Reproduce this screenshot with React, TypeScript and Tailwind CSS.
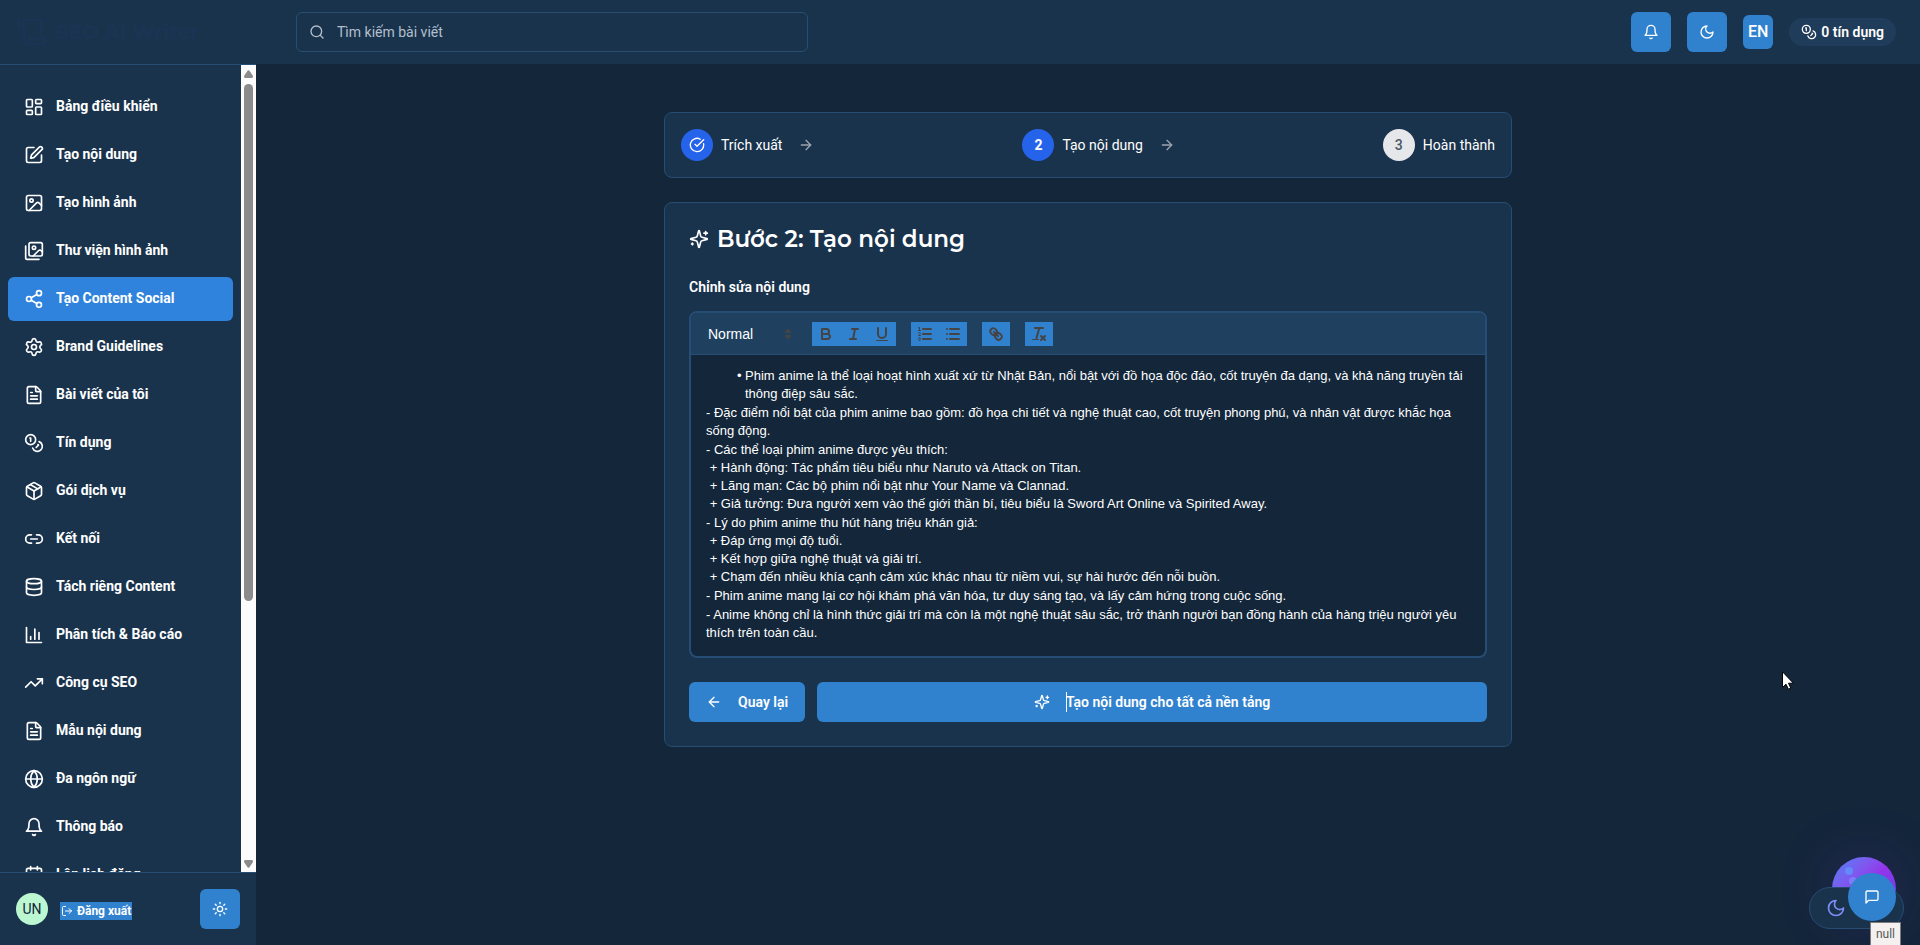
import React from "react";
import {
  ArrowLeft, ArrowRight, Calendar, CircleCheckBig, Coins, Database, FileText, Globe,
  Image, LayoutDashboard, Link2, LogOut, Package, Scroll, Search, Settings, Share2,
  SquarePen, Sun, TrendingUp,
} from "lucide-react";

type IconType = React.ComponentType<{ className?: string }>;

function strokeIcon(body: React.ReactNode): IconType {
  return ({ className }) => (
    <svg
      viewBox="0 0 24 24"
      className={className}
      fill="none"
      stroke="currentColor"
      strokeWidth="2"
      strokeLinecap="round"
      strokeLinejoin="round"
      aria-hidden="true"
    >
      {body}
    </svg>
  );
}

const Sparkles = strokeIcon(
  <>
    <path d="M9.937 15.5A2 2 0 0 0 8.5 14.063l-6.135-1.582a.5.5 0 0 1 0-.962L8.5 9.936A2 2 0 0 0 9.937 8.5l1.582-6.135a.5.5 0 0 1 .963 0L14.063 8.5A2 2 0 0 0 15.5 9.937l6.135 1.581a.5.5 0 0 1 0 .964L15.5 14.063a2 2 0 0 0-1.437 1.437l-1.582 6.135a.5.5 0 0 1-.963 0z" />
    <path d="M20 3v4M22 5h-4M4 17v2M5 18H3" />
  </>,
);
const Moon = strokeIcon(<path d="M12 3a6 6 0 0 0 9 9 9 9 0 1 1-9-9Z" />);
const Bell = strokeIcon(
  <path d="M6 8a6 6 0 0 1 12 0c0 7 3 9 3 9H3s3-2 3-9M10.3 21a1.94 1.94 0 0 0 3.4 0" />,
);
const Chat = strokeIcon(<path d="M21 15a2 2 0 0 1-2 2H7l-4 4V5a2 2 0 0 1 2-2h14a2 2 0 0 1 2 2z" />);
const Chart = strokeIcon(<path d="M3 3v18h18M18 17V9M13 17V5M8 17v-3" />);
const Gallery = strokeIcon(
  <>
    <path d="M18 22H4a2 2 0 0 1-2-2V6M22 13l-1.296-1.296a2.41 2.41 0 0 0-3.408 0L11 18" />
    <circle cx="12" cy="8" r="2" />
    <rect width="16" height="16" x="6" y="2" rx="2" />
  </>,
);

const navItems: { label: string; icon: IconType; active?: boolean }[] = [
  { label: "Bảng điều khiển", icon: LayoutDashboard },
  { label: "Tạo nội dung", icon: SquarePen },
  { label: "Tạo hình ảnh", icon: Image },
  { label: "Thư viện hình ảnh", icon: Gallery },
  { label: "Tạo Content Social", icon: Share2, active: true },
  { label: "Brand Guidelines", icon: Settings },
  { label: "Bài viết của tôi", icon: FileText },
  { label: "Tín dụng", icon: Coins },
  { label: "Gói dịch vụ", icon: Package },
  { label: "Kết nối", icon: Link2 },
  { label: "Tách riêng Content", icon: Database },
  { label: "Phân tích & Báo cáo", icon: Chart },
  { label: "Công cụ SEO", icon: TrendingUp },
  { label: "Mẫu nội dung", icon: FileText },
  { label: "Đa ngôn ngữ", icon: Globe },
  { label: "Thông báo", icon: Bell },
  { label: "Lên lịch đăng", icon: Calendar },
];

const sections: string[][] = [
  ["- Đặc điểm nổi bật của phim anime bao gồm: đồ họa chi tiết và nghệ thuật cao, cốt truyện phong phú, và nhân vật được khắc họa sống động."],
  [
    "- Các thể loại phim anime được yêu thích:",
    " + Hành động: Tác phẩm tiêu biểu như Naruto và Attack on Titan.",
    " + Lãng mạn: Các bộ phim nổi bật như Your Name và Clannad.",
    " + Giả tưởng: Đưa người xem vào thế giới thần bí, tiêu biểu là Sword Art Online và Spirited Away.",
  ],
  [
    "- Lý do phim anime thu hút hàng triệu khán giả:",
    " + Đáp ứng mọi độ tuổi.",
    " + Kết hợp giữa nghệ thuật và giải trí.",
    " + Chạm đến nhiều khía cạnh cảm xúc khác nhau từ niềm vui, sự hài hước đến nỗi buồn.",
  ],
  ["- Phim anime mang lại cơ hội khám phá văn hóa, tư duy sáng tạo, và lấy cảm hứng trong cuộc sống."],
  ["- Anime không chỉ là hình thức giải trí mà còn là một nghệ thuật sâu sắc, trở thành người bạn đồng hành của hàng triệu người yêu thích trên toàn cầu."],
];

function Glyph({ children }: { children: React.ReactNode }) {
  return (
    <svg viewBox="0 0 18 18" className="size-[18px]" fill="none" stroke="#444" strokeWidth="2" strokeLinecap="round" strokeLinejoin="round">
      {children}
    </svg>
  );
}

const toolGroups: { label: string; glyph: React.ReactNode }[][] = [
  [
    { label: "Bold", glyph: <><path d="M5,4H9.5A2.5,2.5,0,0,1,12,6.5v0A2.5,2.5,0,0,1,9.5,9H5V4Z" /><path d="M5,9h5.5A2.5,2.5,0,0,1,13,11.5v0A2.5,2.5,0,0,1,10.5,14H5V9Z" /></> },
    { label: "Italic", glyph: <><path d="M7 4H13M5 14H11M8 14L10 4" /></> },
    { label: "Underline", glyph: <><path d="M5,3V9a4.012,4.012,0,0,0,4,4H9a4.012,4.012,0,0,0,4-4V3" /><rect x="3" y="15" width="12" height="1" rx="0.5" fill="#444" stroke="none" /></> },
  ],
  [
    {
      label: "Ordered list",
      glyph: (
        <>
          <path d="M7 4H15M7 9H15M7 14H15" />
          <path strokeWidth="1" d="M2.5 5.5H4.5" />
          <path fill="#444" stroke="none" d="M3.5,6A0.5,0.5,0,0,1,3,5.5V3.085l-0.276.138A0.5,0.5,0,0,1,2.053,3c-0.124-.247-0.023-0.324.224-0.447l1-.5A0.5,0.5,0,0,1,4,2.5v3A0.5,0.5,0,0,1,3.5,6Z" />
          <path strokeWidth="1" d="M4.5,10.5h-2c0-.234,1.85-1.076,1.85-2.234A0.959,0.959,0,0,0,2.5,8.156" />
          <path strokeWidth="1" d="M2.5,14.846a0.959,0.959,0,0,0,1.85-.109A0.7,0.7,0,0,0,3.75,14a0.688,0.688,0,0,0,.6-0.736,0.959,0.959,0,0,0-1.85-.109" />
        </>
      ),
    },
    { label: "Bullet list", glyph: <><path d="M6 4H15M6 9H15M6 14H15M3 4H3M3 9H3M3 14H3" /></> },
  ],
  [
    {
      label: "Link",
      glyph: (
        <>
          <path d="M7 7L11 11" />
          <path d="M8.9,4.577a3.476,3.476,0,0,1,.36,4.679A3.476,3.476,0,0,1,4.577,8.9C3.185,7.5,2.035,6.4,4.217,4.217S7.5,3.185,8.9,4.577Z" />
          <path d="M13.423,9.1a3.476,3.476,0,0,0-4.679-.36,3.476,3.476,0,0,0,.36,4.679c1.392,1.392,2.5,2.542,4.679.36S14.815,10.5,13.423,9.1Z" />
        </>
      ),
    },
  ],
  [
    {
      label: "Clear formatting",
      glyph: (
        <>
          <path d="M5 3H13M6.5 13L9.35 3M11 11L15 15M15 11L11 15" />
          <rect x="2" y="14" width="7" height="1" rx="0.5" fill="#444" stroke="none" />
        </>
      ),
    },
  ],
];

function ScrollArrow({ className }: { className?: string }) {
  return (
    <svg viewBox="0 0 9 8" className={`h-2 w-[9px] ${className ?? ""}`} fill="#8b8b8b">
      <path d="M3.7 .6Q4.5 -.3 5.3 .6L9 6Q9 8 8 8H1Q0 8 0 6Z" />
    </svg>
  );
}

function Sidebar() {
  return (
    <aside className="flex w-64 shrink-0 flex-col bg-[#1a334d]">
      <div className="flex h-[65px] shrink-0 items-center gap-2 border-b border-[#264d73] px-4 text-[#1b3453]">
        <Scroll className="size-8" />
        <span className="font-[Montserrat,Inter,sans-serif] text-xl font-bold">SEO AI Writer</span>
      </div>
      <div className="flex min-h-0 flex-1">
        <nav className="min-w-0 flex-1 overflow-hidden px-2 py-5">
          <ul className="flex flex-col gap-1">
            {navItems.map(({ label, icon: Icon, active }) => (
              <li key={label}>
                <a
                  href="#"
                  className={`flex h-11 items-center gap-3 rounded-md px-4 text-sm font-bold ${active ? "bg-[#2f83dc]" : ""}`}
                >
                  <Icon className="size-5" />
                  <span className="pb-0.5">{label}</span>
                </a>
              </li>
            ))}
          </ul>
        </nav>
        <div className="flex w-[15px] shrink-0 flex-col items-center bg-[#fcfcfc] py-1" aria-hidden="true">
          <ScrollArrow className="mt-px" />
          <div className="mt-1.5 flex-1">
            <div className="h-2/3 w-[9px] rounded-full bg-[#8b8b8b]" />
          </div>
          <ScrollArrow className="rotate-180" />
        </div>
      </div>
      <div className="flex h-[73px] shrink-0 items-center border-t border-[#264d73] px-4">
        <span className="flex size-8 items-center justify-center rounded-full bg-[#bbf7d0] text-sm text-[#13263a]">UN</span>
        <button className="mt-1 ml-3 flex h-[18px] items-center gap-1 bg-[#3182ce] px-px text-xs font-bold">
          <LogOut className="size-3" />
          Đăng xuất
        </button>
        <button aria-label="Chế độ sáng" className="ml-auto flex size-10 items-center justify-center rounded-md bg-[#3182ce]">
          <Sun className="size-4" />
        </button>
      </div>
    </aside>
  );
}

function Header() {
  return (
    <header className="flex h-16 shrink-0 items-center gap-4 bg-[#1a334d] pr-6 pl-10">
      <div className="flex h-10 w-[512px] items-center gap-3 rounded-md border border-[#264d73] px-3">
        <Search className="size-4 text-[#b3bfcc]" />
        <input
          type="search"
          aria-label="Tìm kiếm bài viết"
          placeholder="Tìm kiếm bài viết"
          className="min-w-0 flex-1 bg-transparent text-sm outline-none placeholder:text-[#b3bfcc]"
        />
      </div>
      <button aria-label="Thông báo" className="ml-auto flex size-10 items-center justify-center rounded-md bg-[#3182ce]">
        <Bell className="size-4" />
      </button>
      <button aria-label="Chế độ tối" className="flex size-10 items-center justify-center rounded-md bg-[#3182ce]">
        <Moon className="size-4" />
      </button>
      <button className="flex h-[34px] items-center rounded-md bg-[#3182ce] px-[5px] text-base font-medium">EN</button>
      <div className="flex h-7 items-center gap-1 rounded-full bg-[#1f3c5a] px-3 text-sm font-semibold">
        <Coins className="size-4" />
        0 tín dụng
      </div>
    </header>
  );
}

function Steps() {
  return (
    <ol className="flex items-center justify-between rounded-lg border border-[#264d73] bg-[#1a334d] p-4 text-sm">
      <li className="flex items-center">
        <span className="flex size-8 items-center justify-center rounded-full bg-[#2563eb]">
          <CircleCheckBig className="size-4" />
        </span>
        <span className="ml-2">Trích xuất</span>
        <ArrowRight className="ml-4 size-4 text-[#9ca3af]" />
      </li>
      <li className="flex items-center">
        <span className="flex size-8 items-center justify-center rounded-full bg-[#2563eb] font-bold">2</span>
        <span className="ml-2">Tạo nội dung</span>
        <ArrowRight className="ml-4 size-4 text-[#9ca3af]" />
      </li>
      <li className="flex items-center">
        <span className="flex size-8 items-center justify-center rounded-full bg-[#e5e7eb] font-medium text-[#4b5563]">3</span>
        <span className="ml-2">Hoàn thành</span>
      </li>
    </ol>
  );
}

function Editor() {
  return (
    <div className="overflow-hidden rounded-lg border-2 border-[#264d73] bg-[#13263a]">
      <div className="flex items-center gap-[15px] border-b border-[#264d73] bg-[#204060] px-2 pt-[9px] pb-2" role="toolbar">
        <div className="relative w-[98px]">
          <select
            aria-label="Kiểu chữ"
            className="h-6 w-full appearance-none bg-transparent pl-[9px] font-['Liberation_Sans',Arial,sans-serif] text-sm font-medium outline-none"
          >
            <option>Normal</option>
          </select>
          <svg viewBox="0 0 18 18" className="pointer-events-none absolute top-[3px] right-0 size-[18px]" fill="#444" stroke="#444" strokeWidth="2" strokeLinejoin="round">
            <path d="M7 11L9 13L11 11ZM7 7L9 5L11 7Z" />
          </svg>
        </div>
        {toolGroups.map((group, i) => (
          <div key={i} className="flex">
            {group.map((tool) => (
              <button key={tool.label} aria-label={tool.label} className="flex h-6 w-7 items-center justify-center bg-[#3182ce]">
                <Glyph>{tool.glyph}</Glyph>
              </button>
            ))}
          </div>
        ))}
      </div>
      <div className="flex flex-col gap-px px-[15px] pt-3 pb-3.5 font-['Liberation_Sans',Arial,sans-serif] text-[13px] leading-[18px]">
        <ul className="pl-[31px]">
          <li className="flex">
            <span className="w-2 shrink-0">•</span>
            <span>Phim anime là thể loại hoạt hình xuất xứ từ Nhật Bản, nổi bật với đồ họa độc đáo, cốt truyện đa dạng, và khả năng truyền tải thông điệp sâu sắc.</span>
          </li>
        </ul>
        {sections.map((lines) => (
          <div key={lines[0]} className="whitespace-pre-wrap">
            {lines.map((line) => <p key={line}>{line}</p>)}
          </div>
        ))}
      </div>
    </div>
  );
}

function FloatingWidgets() {
  return (
    <>
      <div className="fixed right-6 bottom-6 size-16 overflow-hidden rounded-full bg-linear-to-br from-[#3b82f6] via-[#9333ea] to-[#4f46e5] shadow-[0_0_60px_rgba(147,51,234,0.2)]">
        <span className="absolute top-2.5 left-[13px] size-2 rounded-full bg-[#6489fa]" />
        <span className="absolute top-5 left-[17px] size-2 rounded-full bg-[#7c7df8]" />
      </div>
      <button aria-label="Đổi giao diện" className="fixed right-4 bottom-4 flex h-[42px] w-[95px] items-center rounded-full border border-[#264d73] bg-[#1a334d] pl-4 text-[#818cf8]">
        <Moon className="size-5" />
      </button>
      <button aria-label="Trò chuyện" className="fixed right-6 bottom-6 flex size-12 items-center justify-center rounded-full bg-[#3182ce]">
        <Chat className="size-4" />
      </button>
      <div role="tooltip" className="fixed right-[19px] bottom-0 flex h-[23px] w-[31px] items-center justify-center border border-b-0 border-[#7b7b7b] bg-[#f3f0ef] text-xs text-[#575757]">null</div>
      <svg viewBox="0 0 12 19" className="pointer-events-none fixed top-[671px] left-[1782px] h-[19px] w-3" aria-hidden="true">
        <path d="M.5 .8V16.5L4 13.2L6.4 18.2L8.8 17.1L6.5 12.2H11.4Z" fill="#fff" stroke="#000" strokeWidth="1" />
      </svg>
    </>
  );
}

export default function App() {
  return (
    <div className="flex h-screen bg-[#13263a] font-[Roboto,sans-serif] text-white">
      <Sidebar />
      <div className="flex min-w-0 flex-1 flex-col">
        <Header />
        <main className="flex-1 overflow-hidden py-12">
          <div className="mx-auto flex max-w-4xl flex-col gap-6 px-6">
            <Steps />
            <section className="rounded-lg border border-[#264d73] bg-[#1a334d] p-6">
              <h1 className="flex h-6 items-center gap-2 font-[Montserrat,Inter,sans-serif] text-[23px] font-semibold">
                <Sparkles className="size-5" />
                Bước 2: Tạo nội dung
              </h1>
              <h2 className="mt-6 mb-3 text-sm leading-6 font-semibold">Chỉnh sửa nội dung</h2>
              <Editor />
              <div className="mt-6 flex gap-3">
                <button className="flex h-10 items-center rounded-md bg-[#3182ce] px-[17px] text-sm font-semibold">
                  <ArrowLeft className="mr-4 size-4" />
                  Quay lại
                </button>
                <button className="flex h-10 flex-1 items-center justify-center rounded-md bg-[#3182ce] text-sm font-semibold">
                  <Sparkles className="mr-4 size-4" />
                  <span className="relative">
                    <span className="absolute inset-y-0 left-0 w-px bg-white" aria-hidden="true" />
                    Tạo nội dung cho tất cả nền tảng
                  </span>
                </button>
              </div>
            </section>
          </div>
        </main>
      </div>
      <FloatingWidgets />
    </div>
  );
}
